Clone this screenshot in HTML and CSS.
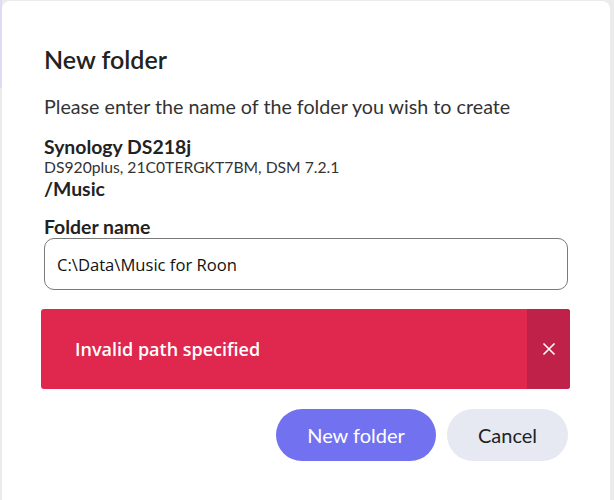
FILE: index.html
```html
<!DOCTYPE html>
<html lang="en">
<head>
    <meta charset="UTF-8">
    <meta name="viewport" content="width=device-width, initial-scale=1.0">
    <title>New folder</title>
    <link rel="stylesheet" href="styles.css">
</head>
<body>

<!-- New folder dialog -->
<div class="dialog">
    <h2 class="dialog-title">New folder</h2>
    <p class="dialog-text">Please enter the name of the folder you wish to create</p>

    <div class="device">
        <div class="device-name">Synology DS218j</div>
        <div class="device-info">DS920plus, 21C0TERGKT7BM, DSM 7.2.1</div>
        <div class="device-path">/Music</div>
    </div>

    <label class="field-label" for="folderName">Folder name</label>
    <input class="field-input" id="folderName" type="text" value="C:\Data\Music for Roon">

    <div class="alert">
        <span class="alert-text">Invalid path specified</span>
        <button class="alert-close" aria-label="Close">
            <svg width="14" height="14" viewBox="0 0 14 14">
                <path d="M1.5 1.5 L12.5 12.5 M12.5 1.5 L1.5 12.5" stroke="#fff" stroke-width="1.6" fill="none"/>
            </svg>
        </button>
    </div>

    <div class="actions">
        <button class="btn btn-primary">New folder</button>
        <button class="btn btn-secondary">Cancel</button>
    </div>
</div>

</body>
</html>
```

FILE: styles.css
```css
body {
    margin: 0;
    padding: 1px 4px 0 2px;
    height: 499px;
    overflow: hidden;
    font-family: Lato, "Liberation Sans", sans-serif;
    background: linear-gradient(#dcdcf5, #dcdcf5) left top / 2px 88px no-repeat, #ebebeb;
}
.dialog {
    background-color: white;
    border-radius: 8px 8px 0 0;
    padding: 40px 42px 60px 42px;
    min-height: 500px;
    color: #222;
}
.dialog-title {
    margin: 0;
    font-size: 25px;
    line-height: 36px;
    font-weight: 600;
    color: #222;
}
.dialog-text {
    margin: 17px 0 0 0;
    font-size: 19.7px;
    line-height: 26px;
    color: #333;
}
.device {
    margin-top: 16px;
}
.device-name, .device-path {
    font-size: 19.4px;
    font-weight: 700;
    line-height: 22px;
}
.device-path {
    line-height: 24px;
    margin-top: 1px;
}
.device-info {
    font-size: 15.7px;
    line-height: 18px;
    color: #333;
}
.field-label {
    display: block;
    margin-top: 15px;
    font-size: 19.4px;
    font-weight: 700;
    line-height: 22px;
}
.field-input {
    display: block;
    box-sizing: border-box;
    width: 100%;
    height: 52px;
    margin: 0;
    padding: 0 12px;
    border: 1px solid #7a7a7a;
    border-radius: 10px;
    font-family: "Open Sans", "Noto Sans", sans-serif;
    font-size: 16.6px;
    color: #111;
    background: white;
}
.alert {
    display: flex;
    margin: 19px -2px 0 -3px;
    height: 80px;
    background-color: #e0284f;
    border-radius: 3px;
    overflow: hidden;
}
.alert-text {
    flex: 1;
    display: flex;
    align-items: center;
    padding-left: 34px;
    color: white;
    font-family: "Open Sans", "Noto Sans", sans-serif;
    font-weight: 600;
    font-size: 18px;
}
.alert-close {
    width: 43px;
    border: none;
    padding: 0;
    background-color: #c02148;
    display: flex;
    align-items: center;
    justify-content: center;
    cursor: pointer;
}
.actions {
    display: flex;
    justify-content: flex-end;
    gap: 11px;
    margin-top: 20px;
}
.btn {
    height: 52px;
    border: none;
    border-radius: 26px;
    font-family: Lato, "Liberation Sans", sans-serif;
    font-size: 20px;
    cursor: pointer;
}
.btn-primary {
    width: 160px;
    background-color: #7272f0;
    color: white;
}
.btn-secondary {
    width: 121px;
    background-color: #e6e9f2;
    color: #222;
}
```
